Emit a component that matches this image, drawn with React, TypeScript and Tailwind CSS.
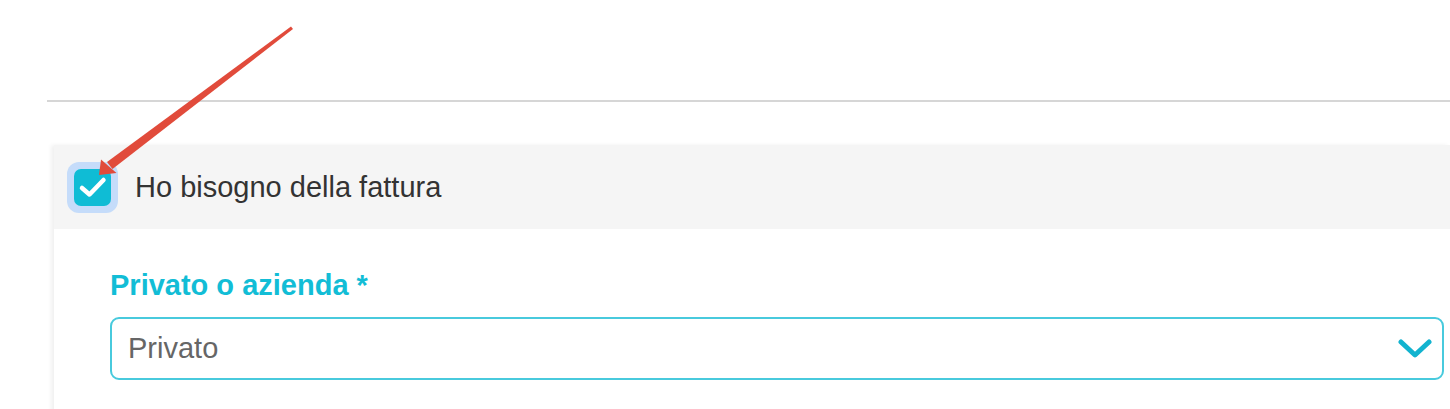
import React from "react";

const Arrow: React.FC = () => (
  <svg
    className="absolute left-0 top-0 pointer-events-none"
    width="320"
    height="200"
    viewBox="0 0 320 200"
  >
    {/* tapered shaft */}
    <polygon points="293,29 291,26.6 107,162 112.5,169" fill="#e14b3b" />
    {/* head */}
    <polygon points="99,175 101,159.5 116.5,173" fill="#e14b3b" />
  </svg>
);

const App: React.FC = () => {
  return (
    <div className="relative w-[1450px] h-[409px] overflow-hidden bg-white font-['Liberation_Sans',Arial,sans-serif]">
      {/* Top separator */}
      <div className="h-[100px]"></div>
      <div className="ml-[47px] h-[2px] bg-[#d6d6d6]"></div>

      {/* Card */}
      <div className="mt-[43px] ml-[54px] shadow-[-3px_0_4px_rgba(0,0,0,0.06)]">
        {/* Header with checkbox */}
        <div className="h-[84px] bg-[#f5f5f5] flex items-center pl-[13px]">
          <div className="w-[51px] h-[51px] rounded-[12px] bg-[#c5dcfa] flex items-center justify-center">
            <div className="w-[37px] h-[37px] rounded-[7px] bg-[#0fbcd5] flex items-center justify-center">
              <svg width="30" height="24" viewBox="0 0 30 24" fill="none">
                <path
                  d="M4 13 L11.5 19.5 L25.5 5"
                  stroke="white"
                  strokeWidth="4.5"
                  strokeLinecap="round"
                  strokeLinejoin="round"
                />
              </svg>
            </div>
          </div>
          <span className="ml-[17px] text-[29px] text-[#333333] leading-none">
            Ho bisogno della fattura
          </span>
        </div>

        {/* Body */}
        <div className="bg-white pl-[56px] pr-[6px] pt-[40px] pb-[40px]">
          <label className="block text-[29px] font-bold text-[#12bdd6] leading-[33px]">
            Privato o azienda *
          </label>
          <div className="mt-[15px] h-[63px] rounded-[9px] border-2 border-[#48cadd] flex items-center justify-between pl-[16px] pr-[10px]">
            <span className="text-[29px] text-[#666666] leading-none">Privato</span>
            <svg width="34" height="20" viewBox="0 0 34 20" fill="none">
              <path
                d="M3 3 L17 16 L31 3"
                stroke="#12b3cf"
                strokeWidth="5"
                strokeLinecap="round"
                strokeLinejoin="round"
              />
            </svg>
          </div>
        </div>
      </div>

      <Arrow />
    </div>
  );
};

export default App;
